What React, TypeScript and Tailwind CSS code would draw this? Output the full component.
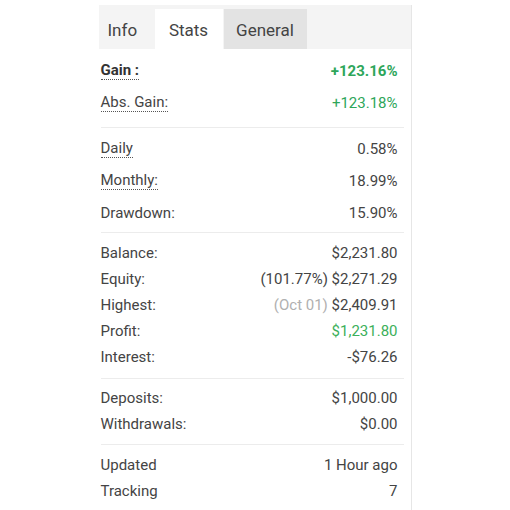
import type { ReactNode } from "react";

type RowProps = {
  label: string;
  value: ReactNode;
  tall?: boolean;
  dotted?: boolean;
  bold?: boolean;
  valueClass?: string;
};

const Row = ({ label, value, tall, dotted, bold, valueClass }: RowProps) => (
  <div
    className={`flex items-center justify-between ${tall ? "h-[32px]" : "h-[26px]"}`}
  >
    <span
      className={`${bold ? "font-bold text-[#333]" : "text-[#444]"} ${
        dotted ? "border-b border-dotted border-[#555] leading-[17px]" : ""
      }`}
    >
      {label}
    </span>
    <span className={`pr-[3px] ${valueClass ?? "text-[#444]"}`}>{value}</span>
  </div>
);

const Divider = () => <div className="h-px bg-[#ececec] mr-[7px]" />;

export default function App() {
  return (
    <div className="min-h-[510px] bg-white font-['Roboto','Liberation_Sans',sans-serif]">
      <div className="mx-auto w-[313px] min-h-[510px] border-r border-[#e6e6e6]">
        <div className="mt-[5px] flex h-[44px] items-end bg-[#f4f4f4] pt-[4px] text-[17px] text-[#444]">
          <div className="flex h-[40px] w-[56px] items-center pl-[9px] pt-[4px]">Info</div>
          <div className="flex h-[40px] w-[68px] items-center justify-center bg-white pt-[4px]">
            Stats
          </div>
          <div className="ml-px flex h-[40px] w-[83px] items-center justify-center bg-[#e3e3e3] pt-[4px]">
            General
          </div>
        </div>

        <div className="pl-[2px] text-[15px]">
          <div className="pt-[6px] pb-[8px] pr-[10px]">
            <Row
              label="Gain :"
              value="+123.16%"
              tall
              dotted
              bold
              valueClass="font-bold text-[#2ea65a]"
            />
            <Row
              label="Abs. Gain:"
              value="+123.18%"
              tall
              dotted
              valueClass="text-[#2ea65a]"
            />
          </div>
          <Divider />
          <div className="pt-[5px] pb-[3px] pr-[10px]">
            <Row label="Daily" value="0.58%" tall dotted />
            <Row label="Monthly:" value="18.99%" tall dotted />
            <Row label="Drawdown:" value="15.90%" tall />
          </div>
          <Divider />
          <div className="pt-[7px] pb-[8px] pr-[10px]">
            <Row label="Balance:" value="$2,231.80" />
            <Row label="Equity:" value="(101.77%) $2,271.29" />
            <Row
              label="Highest:"
              value={
                <>
                  <span className="text-[#b0b0b0]">(Oct 01)</span> $2,409.91
                </>
              }
            />
            <Row label="Profit:" value="$1,231.80" valueClass="text-[#3cb05a]" />
            <Row label="Interest:" value="-$76.26" />
          </div>
          <Divider />
          <div className="pt-[6px] pb-[7px] pr-[10px]">
            <Row label="Deposits:" value="$1,000.00" />
            <Row label="Withdrawals:" value="$0.00" />
          </div>
          <Divider />
          <div className="pt-[7px] pr-[10px]">
            <Row label="Updated" value="1 Hour ago" />
            <Row label="Tracking" value="7" />
          </div>
        </div>
      </div>
    </div>
  );
}
